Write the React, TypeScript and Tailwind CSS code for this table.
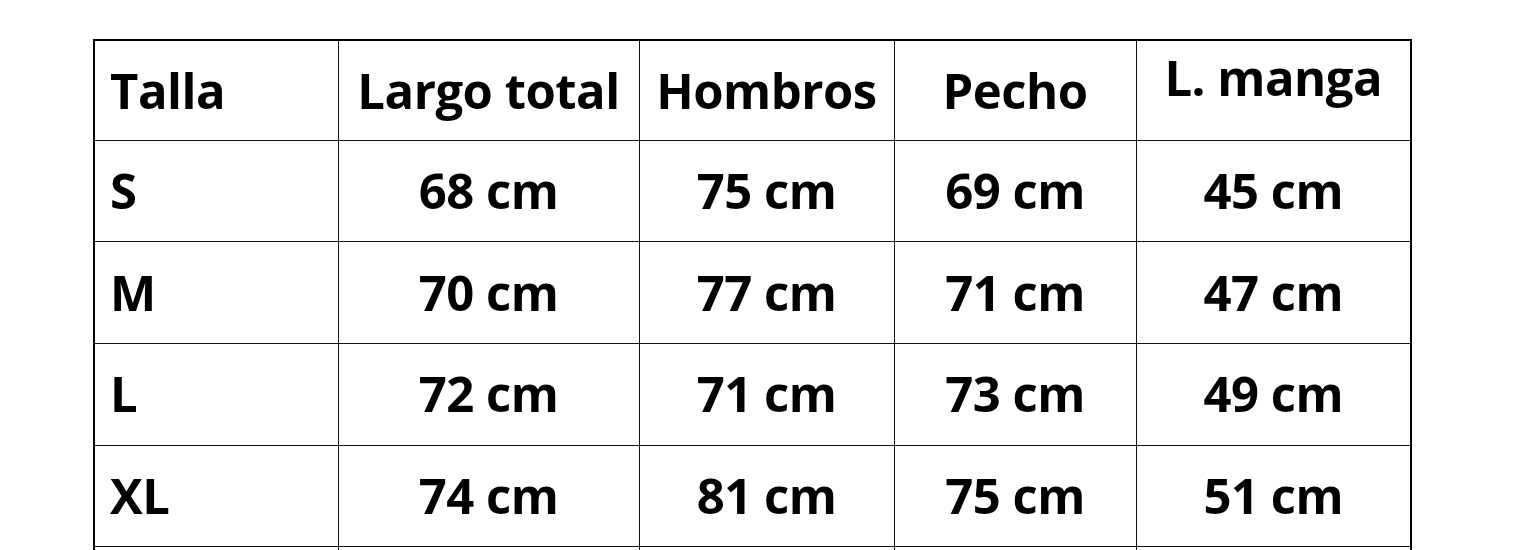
import React from 'react';

const headers = ['Talla', 'Largo total', 'Hombros', 'Pecho', 'L. manga'];

const rows = [
  ['S', '68 cm', '75 cm', '69 cm', '45 cm'],
  ['M', '70 cm', '77 cm', '71 cm', '47 cm'],
  ['L', '72 cm', '71 cm', '73 cm', '49 cm'],
  ['XL', '74 cm', '81 cm', '75 cm', '51 cm'],
];

const widths = ['w-[244px]', 'w-[301px]', 'w-[255px]', 'w-[242px]', 'w-[275px]'];

const App = () => {
  return (
    <div className="h-[550px] overflow-hidden bg-white pl-[93px] pt-[39px] font-['Open_Sans',sans-serif] text-black">
      <table className="table-fixed border-collapse border-2 border-black">
        <thead>
          <tr className="h-[100px]">
            {headers.map((h, i) => (
              <th
                key={h}
                className={`${widths[i]} border-[1.5px] border-[#111] p-0 text-[49px] font-bold tracking-[-0.01em] ${
                  i === 0 ? 'pl-[15px] text-left' : 'text-center'
                }`}
              >
                {/* last header sits a bit higher in the original */}
                <span className={i === 4 ? 'relative -top-[13px]' : ''}>{h}</span>
              </th>
            ))}
          </tr>
        </thead>
        <tbody>
          {rows.map((r) => (
            <tr key={r[0]} className="h-[101.7px]">
              {r.map((c, i) => (
                <td
                  key={i}
                  className={`border-[1.5px] border-[#111] p-0 text-[49px] font-bold tracking-[-0.01em] ${
                    i === 0 ? 'pl-[15px] text-left' : 'text-center'
                  }`}
                >
                  {c}
                </td>
              ))}
            </tr>
          ))}
          {/* next row, cut off by the bottom edge */}
          <tr className="h-[101.7px]">
            {headers.map((h) => (
              <td key={h} className="border-[1.5px] border-[#111] p-0" />
            ))}
          </tr>
        </tbody>
      </table>
    </div>
  );
};

export default App;
